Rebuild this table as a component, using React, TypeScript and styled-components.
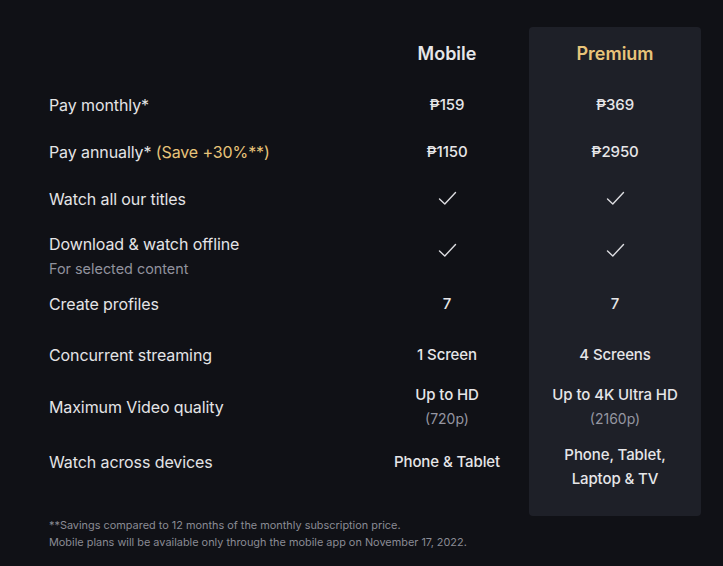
import React from "react";
import styled, { createGlobalStyle } from "styled-components";

const GlobalStyle = createGlobalStyle`
  html, body { margin: 0; padding: 0; background: #101116; }
  body { font-family: Inter, "Noto Sans", sans-serif; color: #e4e4e6; -webkit-font-smoothing: antialiased; }
  * { box-sizing: border-box; }
`;

const Page = styled.div`
  width: 723px;
  min-height: 566px;
  background: #101116;
  padding: 27px 22px 0 49px;
`;

const Table = styled.div`
  display: grid;
  grid-template-columns: 316px 164px 172px;
  grid-template-rows: 53px 49px 46px 47px 56px 51px 51px 54px 56px 26px;
`;

const PremiumBackdrop = styled.div`
  grid-column: 3;
  grid-row: 1 / -1;
  background: #1e2028;
  border-radius: 4px;
`;

const Label = styled.div<{ $row: number; $top?: number }>`
  grid-column: 1;
  grid-row: ${(p) => p.$row};
  display: flex;
  flex-direction: column;
  justify-content: ${(p) => (p.$top !== undefined ? "flex-start" : "center")};
  padding-top: ${(p) => p.$top ?? 0}px;
  font-size: 16px;
  line-height: 22px;
  letter-spacing: -0.1px;
  color: #e4e4e6;
`;

const Sub = styled.span`
  font-size: 14.4px;
  line-height: 28px;
  letter-spacing: 0;
  color: #90929d;
`;

const Gold = styled.span`
  color: #e8c47a;
`;

const Cell = styled.div<{ $col: number; $row: number; $shift?: number }>`
  grid-column: ${(p) => p.$col};
  grid-row: ${(p) => p.$row};
  position: relative;
  z-index: 1;
  display: flex;
  flex-direction: column;
  align-items: center;
  justify-content: center;
  text-align: center;
  padding-top: ${(p) => p.$shift ?? 0}px;
  font-size: 15px;
  line-height: 24px;
  font-weight: 500;
  letter-spacing: -0.1px;
  color: #e6e6e8;
`;

const Heading = styled.div<{ $col: number; $gold?: boolean }>`
  grid-column: ${(p) => p.$col};
  grid-row: 1;
  position: relative;
  z-index: 1;
  display: flex;
  align-items: center;
  justify-content: center;
  padding-bottom: 1px;
  font-size: 18px;
  font-weight: 600;
  color: ${(p) => (p.$gold ? "#e8c47a" : "#e6e6e8")};
`;

const Muted = styled.span`
  font-size: 14px;
  font-weight: 400;
  letter-spacing: 0;
  color: #9596a1;
`;

const Footer = styled.div`
  margin-top: 1px;
  font-size: 10.9px;
  line-height: 17px;
  color: #8a8b94;
`;

const Check = () => (
  <svg width="19" height="15" viewBox="0 0 19 15" fill="none">
    <path d="M1.5 8 L6.8 13 L17.5 1.5" stroke="#dcdce0" strokeWidth="1.4" strokeLinecap="round" strokeLinejoin="round" />
  </svg>
);

export default function App() {
  return (
    <Page>
      <GlobalStyle />
      <Table>
        <PremiumBackdrop />
        <Heading $col={2}>Mobile</Heading>
        <Heading $col={3} $gold>Premium</Heading>

        <Label $row={2}>Pay monthly*</Label>
        <Cell $col={2} $row={2}>₱159</Cell>
        <Cell $col={3} $row={2}>₱369</Cell>

        <Label $row={3}>
          <span>
            Pay annually* <Gold>(Save +30%**)</Gold>
          </span>
        </Label>
        <Cell $col={2} $row={3}>₱1150</Cell>
        <Cell $col={3} $row={3}>₱2950</Cell>

        <Label $row={4}>Watch all our titles</Label>
        <Cell $col={2} $row={4}><Check /></Cell>
        <Cell $col={3} $row={4}><Check /></Cell>

        <Label $row={5} $top={11}>
          <span>Download &amp; watch offline</span>
          <Sub>For selected content</Sub>
        </Label>
        <Cell $col={2} $row={5}><Check /></Cell>
        <Cell $col={3} $row={5}><Check /></Cell>

        <Label $row={6}>Create profiles</Label>
        <Cell $col={2} $row={6}>7</Cell>
        <Cell $col={3} $row={6}>7</Cell>

        <Label $row={7}>Concurrent streaming</Label>
        <Cell $col={2} $row={7}>1 Screen</Cell>
        <Cell $col={3} $row={7}>4 Screens</Cell>

        <Label $row={8}>Maximum Video quality</Label>
        <Cell $col={2} $row={8}>
          <span>Up to HD</span>
          <Muted>(720p)</Muted>
        </Cell>
        <Cell $col={3} $row={8}>
          <span>Up to 4K Ultra HD</span>
          <Muted>(2160p)</Muted>
        </Cell>

        <Label $row={9}>Watch across devices</Label>
        <Cell $col={2} $row={9}>Phone &amp; Tablet</Cell>
        <Cell $col={3} $row={9} $shift={10}>
          <span>Phone, Tablet,</span>
          <span>Laptop &amp; TV</span>
        </Cell>
      </Table>
      <Footer>
        **Savings compared to 12 months of the monthly subscription price.
        <br />
        Mobile plans will be available only through the mobile app on November 17, 2022.
      </Footer>
    </Page>
  );
}
